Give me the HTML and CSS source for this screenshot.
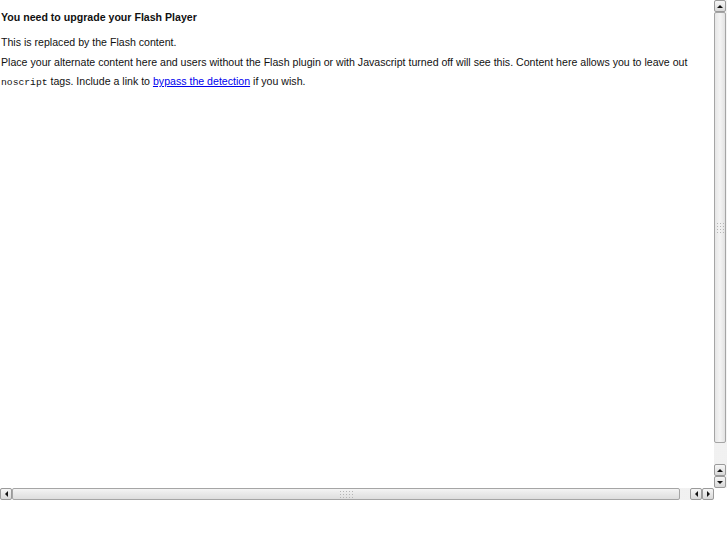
FILE: index.html
```html
<!DOCTYPE html>
<html>
<head>
<meta charset="utf-8">
<link rel="stylesheet" href="styles.css">
</head>
<body>
<div class="frame">
  <div class="content">
    <h3 class="title">You need to upgrade your Flash Player</h3>
    <p class="para first">This is replaced by the Flash content.</p>
    <p class="para">Place your alternate content here and users without the Flash plugin or with Javascript turned off will see this. Content here allows you to leave out <code class="code">noscript</code> tags. Include a link to <a class="link" href="#">bypass the detection</a> if you wish.</p>
  </div>
  <div class="vbar">
    <div class="btn up"><span class="tri tri-up"></span></div>
    <div class="vthumb"><span class="grip vgrip"></span></div>
    <div class="trough"></div>
    <div class="btn up"><span class="tri tri-up"></span></div>
    <div class="btn down"><span class="tri tri-down"></span></div>
  </div>
  <div class="hbar">
    <div class="btn hbtn"><span class="tri tri-left"></span></div>
    <div class="hthumb"><span class="grip hgrip"></span></div>
    <div class="trough"></div>
    <div class="btn hbtn"><span class="tri tri-left"></span></div>
    <div class="btn hbtn"><span class="tri tri-right"></span></div>
  </div>
  <div class="corner"></div>
</div>
</body>
</html>
```
FILE: styles.css
```css
html, body {
  margin: 0;
  padding: 0;
  background: #fff;
}
.frame {
  width: 727px;
  height: 500px;
  display: grid;
  grid-template-columns: 714px 13px;
  grid-template-rows: 488px 12px;
}
.content {
  overflow: hidden;
  padding: 0 0 0 1px;
  font-family: "Liberation Sans", Arial, sans-serif;
  font-size: 10.6px;
  line-height: 19px;
  color: #111;
}
.title {
  margin: 8px 0 0 0;
  font-size: 10.6px;
  font-weight: bold;
}
.para {
  margin: 1px 0 0 0;
}
.para.first {
  margin-top: 6px;
}
.code {
  font-family: "Liberation Mono", "Courier New", monospace;
  font-size: 9.7px;
  font-weight: normal;
}
.link {
  color: #0000ee;
  text-decoration: underline;
}
.vbar {
  display: flex;
  flex-direction: column;
  background: #f4f4f4;
}
.hbar {
  display: flex;
  flex-direction: row;
  background: #f4f4f4;
}
.corner {
  background: #fff;
}
.btn {
  box-sizing: border-box;
  width: 12px;
  height: 12px;
  flex: none;
  border: 1px solid #9a9a9a;
  border-radius: 2px;
  background: linear-gradient(#f6f6f6, #d8d8d8);
  display: flex;
  align-items: center;
  justify-content: center;
}
.vthumb {
  box-sizing: border-box;
  height: 431px;
  width: 12px;
  flex: none;
  border: 1px solid #a5a5a5;
  border-radius: 2px;
  background: linear-gradient(90deg, #e6e6e6, #f4f4f4 50%, #e2e2e2);
  display: flex;
  align-items: center;
  justify-content: center;
}
.hthumb {
  box-sizing: border-box;
  width: 668px;
  height: 12px;
  flex: none;
  border: 1px solid #a5a5a5;
  border-radius: 2px;
  background: linear-gradient(#f4f4f4, #e6e6e6 60%, #dedede);
  display: flex;
  align-items: center;
  justify-content: center;
}
.trough {
  flex: 1;
  background-color: #fbfbfb;
  background-image: radial-gradient(circle, #e4e4e4 0.6px, transparent 0.8px);
  background-size: 2px 2px;
}
.grip {
  display: block;
  background-image: radial-gradient(circle, #b5b5b5 0.7px, transparent 0.9px);
  background-size: 3px 3px;
}
.vgrip {
  width: 9px;
  height: 12px;
}
.hgrip {
  width: 15px;
  height: 9px;
}
.tri {
  display: block;
  width: 0;
  height: 0;
}
.tri-up {
  border-left: 3px solid transparent;
  border-right: 3px solid transparent;
  border-bottom: 3px solid #111;
}
.tri-down {
  border-left: 3px solid transparent;
  border-right: 3px solid transparent;
  border-top: 3px solid #111;
}
.tri-left {
  border-top: 3px solid transparent;
  border-bottom: 3px solid transparent;
  border-right: 3px solid #111;
}
.tri-right {
  border-top: 3px solid transparent;
  border-bottom: 3px solid transparent;
  border-left: 3px solid #111;
}
```
